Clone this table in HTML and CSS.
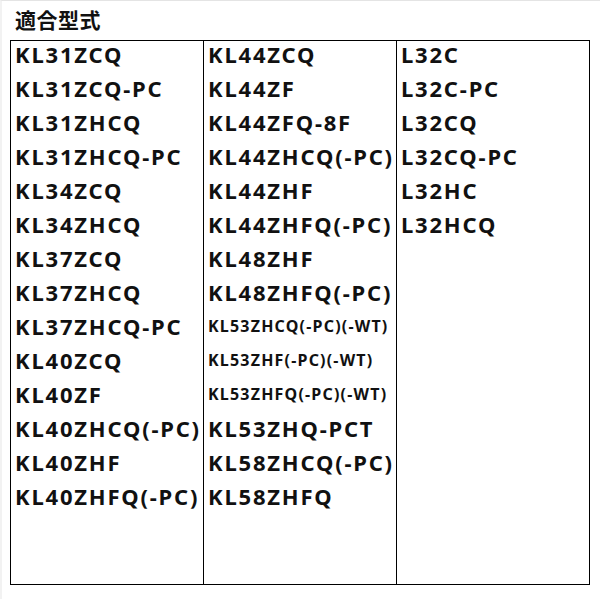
FILE: index.html
```html
<!DOCTYPE html>
<html lang="ja">
<head>
<meta charset="utf-8">
<title>適合型式</title>
<link rel="stylesheet" href="styles.css">
</head>
<body>
<div class="page">
  <h1 class="title">適合型式</h1>
  <div class="models">
    <ul class="col">
      <li>KL31ZCQ</li>
      <li>KL31ZCQ-PC</li>
      <li>KL31ZHCQ</li>
      <li>KL31ZHCQ-PC</li>
      <li>KL34ZCQ</li>
      <li>KL34ZHCQ</li>
      <li>KL37ZCQ</li>
      <li>KL37ZHCQ</li>
      <li>KL37ZHCQ-PC</li>
      <li>KL40ZCQ</li>
      <li>KL40ZF</li>
      <li>KL40ZHCQ(-PC)</li>
      <li>KL40ZHF</li>
      <li>KL40ZHFQ(-PC)</li>
    </ul>
    <ul class="col">
      <li>KL44ZCQ</li>
      <li>KL44ZF</li>
      <li>KL44ZFQ-8F</li>
      <li>KL44ZHCQ(-PC)</li>
      <li>KL44ZHF</li>
      <li>KL44ZHFQ(-PC)</li>
      <li>KL48ZHF</li>
      <li>KL48ZHFQ(-PC)</li>
      <li class="small">KL53ZHCQ(-PC)(-WT)</li>
      <li class="small">KL53ZHF(-PC)(-WT)</li>
      <li class="small">KL53ZHFQ(-PC)(-WT)</li>
      <li>KL53ZHQ-PCT</li>
      <li>KL58ZHCQ(-PC)</li>
      <li>KL58ZHFQ</li>
    </ul>
    <ul class="col">
      <li>L32C</li>
      <li>L32C-PC</li>
      <li>L32CQ</li>
      <li>L32CQ-PC</li>
      <li>L32HC</li>
      <li>L32HCQ</li>
    </ul>
  </div>
</div>
</body>
</html>
```

FILE: styles.css
```css
html, body {
  margin: 0;
  padding: 0;
  background: #ffffff;
}

body {
  border-top: 1px solid #e4e4e4;
  border-left: 2px solid #f2f2f2;
  min-height: 599px;
  box-sizing: border-box;
}

.page {
  padding: 8px 0 0 8px;
  color: #111111;
}

.title {
  margin: 0 0 10px 5px;
  font-family: "Noto Sans CJK JP", sans-serif;
  font-weight: 700;
  font-size: 21px;
  line-height: 21px;
  letter-spacing: 0.5px;
}

.models {
  display: grid;
  grid-template-columns: 192px 193px 193px;
  width: 580px;
  height: 545px;
  box-sizing: border-box;
  border: 1px solid #000000;
}

.col {
  list-style: none;
  margin: 0;
  padding: 0 0 0 4px;
}

.col + .col {
  border-left: 1px solid #000000;
}

.col li {
  font-family: "Noto Sans", sans-serif;
  font-weight: 700;
  font-size: 22px;
  line-height: 27px;
  letter-spacing: 1.8px;
  margin-bottom: 7px;
  white-space: nowrap;
}

.col li.small {
  font-size: 16px;
  letter-spacing: 1.2px;
  font-weight: 700;
}
```
